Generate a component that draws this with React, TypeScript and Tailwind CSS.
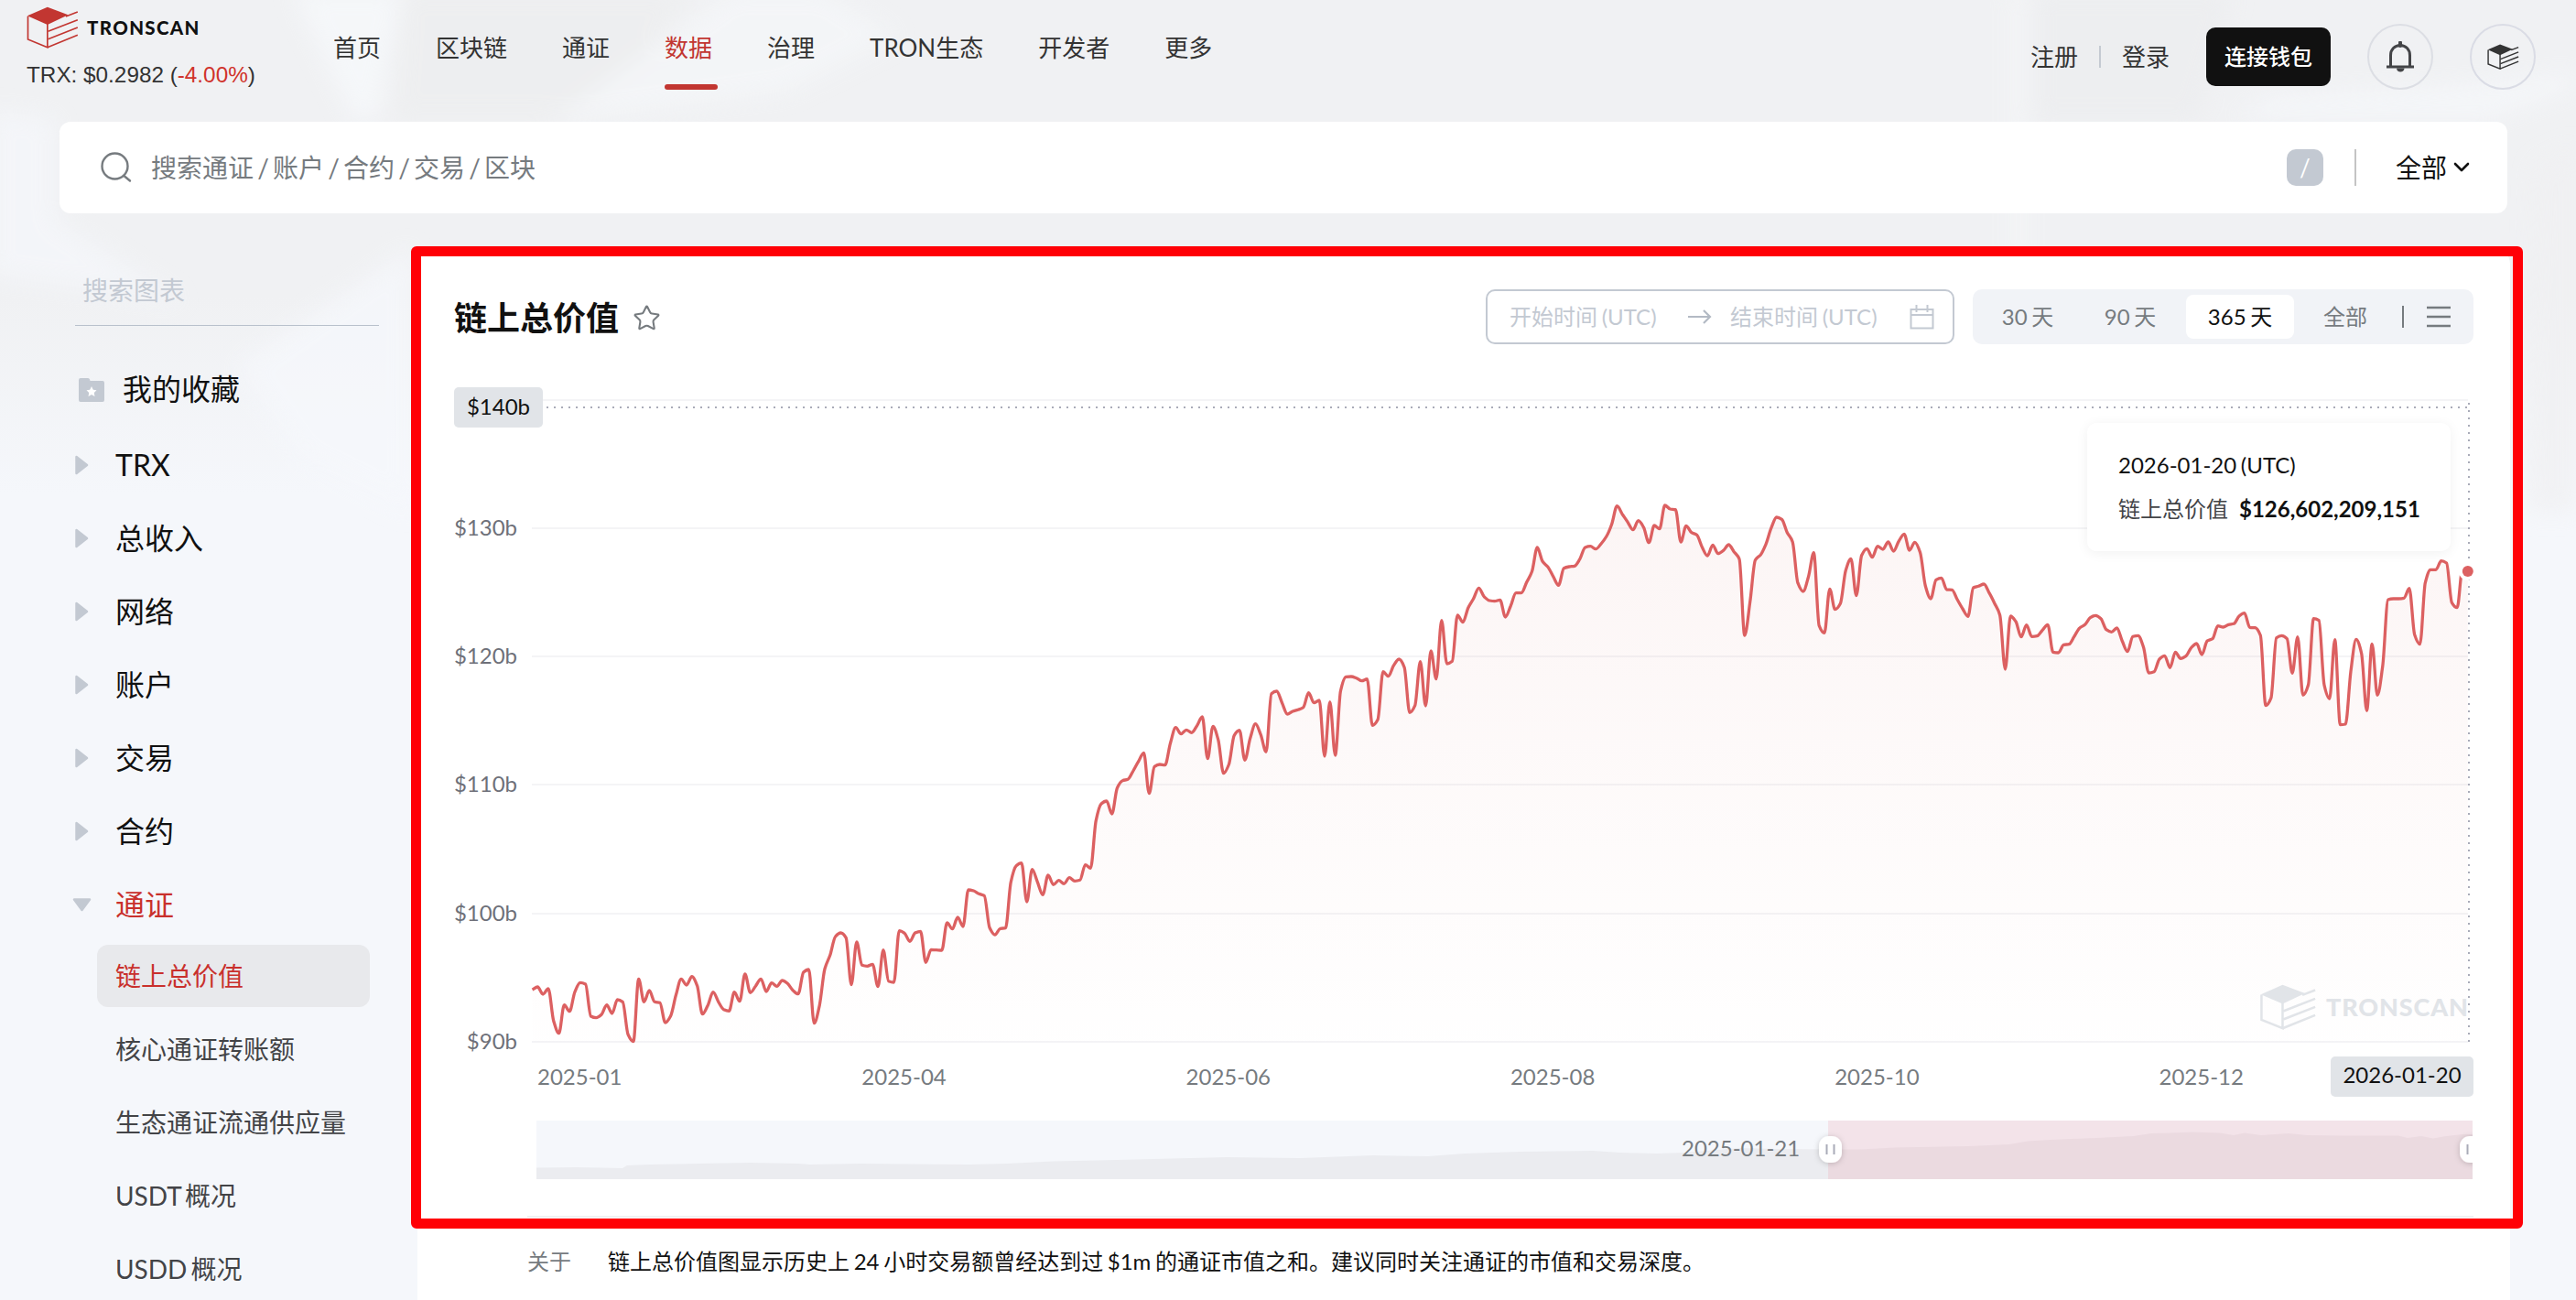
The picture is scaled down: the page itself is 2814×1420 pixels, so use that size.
import { Star } from 'lucide-react';
import clsx from 'clsx';

const NAV_ITEMS = ['首页', '区块链', '通证', '数据', '治理', 'TRON生态', '开发者', '更多'];

const MENU_ITEMS = ['TRX', '总收入', '网络', '账户', '交易', '合约', '通证'];

const SUB_ITEMS = ['链上总价值', '核心通证转账额', '生态通证流通供应量', 'USDT 概况', 'USDD 概况'];

const RANGES = [
  { label: '30 天', className: 'w-[112px]' },
  { label: '90 天', className: 'w-[112px]' },
  { label: '365 天', className: 'w-[118px]' },
  { label: '全部', className: 'w-[112px]' },
];

const Y_TICKS = [
  { label: '$130b', y: 577 },
  { label: '$120b', y: 717 },
  { label: '$110b', y: 857 },
  { label: '$100b', y: 998 },
  { label: '$90b', y: 1138 },
];

const X_TICKS = ['2025-01', '2025-04', '2025-06', '2025-08', '2025-10', '2025-12'];

const PLOT_LEFT = 581.5;
const PLOT_TOP = 520;
const PLOT_BOTTOM = 1138;
const DAY_WIDTH = 5.8085;

// One value per day, in thirds of a pixel below PLOT_TOP
const SERIES = [
  1683, 1674, 1698, 1680, 1785, 1826, 1733, 1754, 1690, 1660, 1665, 1770, 1775, 1765, 1733, 1761,
  1716, 1723, 1830, 1853, 1648, 1723, 1686, 1723, 1726, 1791, 1770, 1702, 1648, 1668, 1640, 1670,
  1763, 1735, 1691, 1723, 1748, 1753, 1691, 1721, 1632, 1693, 1671, 1648, 1689, 1661, 1672, 1653,
  1663, 1685, 1697, 1626, 1617, 1793, 1735, 1615, 1570, 1509, 1497, 1513, 1667, 1527, 1603, 1606,
  1600, 1673, 1553, 1655, 1659, 1490, 1498, 1525, 1497, 1492, 1594, 1552, 1553, 1554, 1464, 1484,
  1446, 1476, 1356, 1359, 1369, 1375, 1480, 1503, 1483, 1481, 1330, 1277, 1268, 1395, 1289, 1330,
  1372, 1308, 1339, 1325, 1336, 1316, 1327, 1324, 1274, 1285, 1130, 1074, 1065, 1107, 1022, 998,
  994, 966, 935, 907, 1040, 952, 945, 947, 875, 824, 845, 832, 841, 818, 789, 926, 820, 865, 974,
  945, 850, 833, 931, 860, 812, 848, 904, 713, 705, 743, 780, 771, 766, 758, 710, 743, 735, 918,
  740, 915, 705, 658, 657, 662, 671, 665, 817, 798, 641, 656, 620, 600, 627, 775, 752, 608, 753,
  573, 665, 473, 615, 607, 456, 479, 432, 402, 367, 395, 408, 410, 406, 462, 425, 383, 383, 348,
  313, 234, 280, 298, 329, 358, 302, 297, 295, 272, 234, 230, 239, 222, 198, 158, 98, 125, 151,
  176, 146, 168, 218, 162, 173, 96, 108, 110, 216, 163, 185, 193, 233, 261, 226, 254, 244, 225,
  248, 272, 522, 415, 275, 258, 223, 170, 135, 142, 185, 215, 350, 378, 330, 251, 490, 514, 370,
  437, 418, 310, 271, 392, 260, 238, 266, 230, 240, 216, 246, 213, 190, 243, 217, 250, 360, 402,
  340, 334, 372, 373, 405, 435, 460, 366, 361, 354, 383, 417, 455, 633, 459, 477, 527, 488, 526,
  524, 505, 487, 577, 579, 553, 551, 525, 498, 487, 464, 457, 467, 503, 511, 498, 540, 575, 526,
  523, 560, 645, 641, 600, 589, 628, 577, 598, 590, 562, 549, 585, 540, 533, 491, 495, 487, 484,
  459, 449, 496, 497, 522, 752, 727, 530, 523, 533, 646, 527, 718, 685, 467, 473, 685, 730, 536,
  815, 813, 640, 535, 580, 769, 550, 718, 620, 405, 402, 402, 400, 368, 520, 551, 350, 307, 307,
  278, 285, 415, 431, 305, 312,
];

// Overview silhouette behind the range slider
const OVERVIEW =
  '586,1275.5 630,1275 680,1276 685,1273 710,1272 740,1271.5 820,1270 872,1271 885,1272 940,1271 1060,1272 1100,1271 1150,1268.5 1200,1267.5 1260,1266 1340,1264 1420,1265 1500,1262 1560,1263 1600,1260 1660,1258 1740,1257 1770,1259 1810,1260 1840,1259 1900,1254 1940,1255 1997,1255.5 2030,1255.5 2070,1253.5 2120,1252.5 2150,1252 2195,1250 2215,1246.5 2240,1245 2290,1243 2330,1241 2350,1238 2370,1237.5 2395,1236.5 2425,1237.5 2440,1240 2452,1237.5 2470,1240 2500,1238 2520,1240 2560,1240.5 2620,1240.5 2630,1243 2645,1241 2658,1243.5 2672,1241 2690,1239 2701,1239';

const POINTS = SERIES.map((v, i) => ({ x: PLOT_LEFT + i * DAY_WIDTH, y: PLOT_TOP + v / 3 }));

// Monotone cubic interpolation, so that the curve never overshoots a day's value
function buildLine(points: { x: number; y: number }[]) {
  const slopes = points.slice(1).map((p, i) => (p.y - points[i].y) / (p.x - points[i].x));
  const tangents = points.map((_, i) => {
    if (i === 0) return slopes[0];
    if (i === points.length - 1) return slopes[i - 1];
    const a = slopes[i - 1];
    const b = slopes[i];
    return a * b <= 0 ? 0 : (2 * a * b) / (a + b);
  });
  return points
    .map((p, i) => {
      if (i === 0) return `M${p.x.toFixed(1)},${p.y.toFixed(1)}`;
      const prev = points[i - 1];
      const d = (p.x - prev.x) / 3;
      return `C${(prev.x + d).toFixed(1)},${(prev.y + tangents[i - 1] * d).toFixed(1)} ${(p.x - d).toFixed(1)},${(p.y - tangents[i] * d).toFixed(1)} ${p.x.toFixed(1)},${p.y.toFixed(1)}`;
    })
    .join('');
}

const LINE = buildLine(POINTS);
const AREA = `${LINE}L2695.8,${PLOT_BOTTOM}L${PLOT_LEFT},${PLOT_BOTTOM}Z`;

function CubePaths() {
  return (
    <>
      <path d="M68 2 L136 28 L68 60 L2 31 Z" fill="currentColor" stroke="none" />
      <path d="M4 32 V108 L68 134 V56" />
      <path d="M128 33 L167 18 M70 82 L167 44 M70 107 L167 69 M68 134 L167 94" />
    </>
  );
}

function CubeIcon({ className, strokeWidth = 5 }: { className?: string; strokeWidth?: number }) {
  return (
    <svg viewBox="0 0 170 138" className={className} fill="none" stroke="currentColor" strokeWidth={strokeWidth}>
      <CubePaths />
    </svg>
  );
}

function Background() {
  return (
    <svg className="absolute inset-0" width="2814" height="1420" viewBox="0 0 2814 1420">
      <defs>
        <linearGradient id="haze" x1="0" y1="0" x2="0" y2="1">
          <stop offset="0" stopColor="#f0f1f3" />
          <stop offset="0.6" stopColor="#f0f1f3" />
          <stop offset="1" stopColor="#f5f7fb" />
        </linearGradient>
        <filter id="soft">
          <feGaussianBlur stdDeviation="12" />
        </filter>
      </defs>
      <rect width="2814" height="1420" fill="#f5f7fb" />
      <rect width="2814" height="540" fill="url(#haze)" />
      <g filter="url(#soft)" opacity="0.75">
        <path d="M440 -10 H760 L660 130 H430 Z" fill="#edeeef" />
        <path d="M320 -10 H440 L412 130 H385 Z" fill="#f7f9fc" />
        <path d="M800 -10 H900 L980 40 L860 100 L600 135 Z" fill="#f5f7f9" />
        <path d="M-10 120 L60 130 V240 L200 330 L-10 300 Z" fill="#f5f7fb" />
        <path d="M2220 -10 H2440 L2400 133 H2220 Z" fill="#ecedef" />
        <path d="M2195 -10 H2215 V290 H2195 Z" fill="#f5f6f8" />
        <path d="M2440 130 L2480 105 L2700 92 L2814 80 V95 L2720 130 Z" fill="#f6f8fb" />
        <path d="M2770 180 L2814 160 V560 L2760 560 Z" fill="#f0f0f2" />
        <path d="M449 270 L260 400 L330 500 L449 560 Z" fill="#f6f8fc" />
      </g>
    </svg>
  );
}

function Header() {
  return (
    <header className="flex h-[133px] items-start pl-[29px] pr-[44px]">
      <div className="w-[335px] pt-[7px]">
        <div className="flex items-center gap-[9px]">
          <CubeIcon className="h-[46px] w-[57px] text-[#c23631]" />
          <span className="font-['Lato'] text-[20.5px] font-black leading-none tracking-[1.35px] text-[#111]">TRONSCAN</span>
        </div>
        <div className="mt-[15px] whitespace-nowrap font-['Liberation_Sans'] text-[24.3px] leading-[28px] text-[#333] [word-spacing:0px]">
          TRX: $0.2982 (<span className="text-[#d0332b]">-4.00%</span>)
        </div>
      </div>
      <nav className="flex gap-[60px] pt-[32px] text-[26px] leading-[40px] text-[#333]">
        {NAV_ITEMS.map((item) => (
          <div key={item} className={clsx('relative whitespace-nowrap', item === '数据' && 'text-[#c23631]')}>
            {item}
            {item === '数据' && (
              <span className="absolute left-0 top-[60px] h-1.5 w-[58px] rounded-[3px] bg-[#c23631]" />
            )}
          </div>
        ))}
      </nav>
      <div className="ml-auto flex items-center pt-[26px] text-[26px] text-[#333]">
        <span>注册</span>
        <span className="ml-[23px] mr-[23px] h-6 w-0.5 bg-[#c4cad2]" />
        <span>登录</span>
        <button className="ml-10 h-16 w-[136px] rounded-[10px] bg-[#111] text-[24px] font-medium text-white">连接钱包</button>
        <div className="ml-10 flex size-[72px] items-center justify-center rounded-full border-2 border-[#dcdee4]">
          <svg width="32" height="34" viewBox="0 0 32 34" fill="none" stroke="#434447" strokeWidth="3">
            <path d="M5.5 27 V15.5 C5.5 9 10 4.5 16 4.5 C22 4.5 26.5 9 26.5 15.5 V27" />
            <path d="M1 28 H31" />
            <path d="M16 1.500 V5" strokeWidth="4" strokeLinecap="round" />
            <path d="M12 29.5 H20.5 C20.5 32 18.5 33.5 16.2 33.5 C14 33.5 12 32 12 29.5 Z" fill="#434447" stroke="none" />
          </svg>
        </div>
        <div className="ml-10 flex size-[72px] items-center justify-center rounded-full border-2 border-[#dadce5]">
          <CubeIcon className="h-7 w-[35px] text-[#333]" strokeWidth={7} />
        </div>
      </div>
    </header>
  );
}

function SearchBar() {
  return (
    <div className="ml-[65px] mr-[75px] flex h-[100px] items-center rounded-xl bg-white pl-[45px] pr-[41px]">
      <svg width="34" height="34" viewBox="0 0 34 34" fill="none" stroke="#767b7f" strokeWidth="2.4" strokeLinecap="round">
        <circle cx="15.5" cy="15.5" r="14" />
        <path d="M26 26.5 L32 31.5" />
      </svg>
      <span className="ml-[21px] text-[28px] text-[#767b7f] [word-spacing:-3px]">搜索通证 / 账户 / 合约 / 交易 / 区块</span>
      <span className="ml-auto flex size-10 items-center justify-center rounded-[10px] bg-[#c3c9d2] text-[26px] text-white">/</span>
      <span className="ml-[34px] mr-[43px] h-10 w-0.5 bg-[#c4c4c4]" />
      <span className="text-[28px] text-[#111]">全部</span>
      <svg className="ml-[7px]" width="18" height="12" viewBox="0 0 18 12" fill="none" stroke="#111" strokeWidth="2.6" strokeLinecap="round" strokeLinejoin="round">
        <path d="M2 2 L9 9 L16 2" />
      </svg>
    </div>
  );
}

function Sidebar() {
  return (
    <aside className="ml-[82px] w-[332px] shrink-0">
      <div className="flex h-[87px] items-center border-b border-[#b9c1cc] pl-2 pt-2.5 text-[28px] text-[#c3c9d2]">搜索图表</div>
      <div className="mt-[29px] flex h-20 items-center pl-1 text-[32px] text-[#111]">
        <svg className="mt-0.5" width="28" height="26" viewBox="0 0 28 26">
          <path d="M2 0 H10 Q12 0 12.5 3 H26 Q28 3 28 5 V24 Q28 26 26 26 H2 Q0 26 0 24 V2 Q0 0 2 0 Z" fill="#c3c9d2" />
          <path d="M14 9 L15.8 12.7 L19.5 13.2 L16.8 16 L17.5 20 L14 18 L10.5 20 L11.2 16 L8.5 13.2 L12.2 12.7 Z" fill="#fff" />
        </svg>
        <span className="ml-5">我的收藏</span>
      </div>
      <div className="mt-[3px]">
        {MENU_ITEMS.map((item) => {
          const open = item === '通证';
          return (
            <div key={item} className={clsx('flex h-20 items-center text-[32px]', open ? 'text-[#c9302c]' : 'text-[#111]')}>
              {open ? (
                <svg className="-ml-[3px] mr-[26px]" width="21" height="15" viewBox="0 0 21 15">
                  <path d="M2 1.5 H19 L10.5 13 Z" fill="#c3c9d2" stroke="#c3c9d2" strokeWidth="2.5" strokeLinejoin="round" />
                </svg>
              ) : (
                <svg className="mr-[29px]" width="15" height="22" viewBox="0 0 15 22">
                  <path d="M1.5 2 V20 L13 11 Z" fill="#c3c9d2" stroke="#c3c9d2" strokeWidth="2.5" strokeLinejoin="round" />
                </svg>
              )}
              {item}
            </div>
          );
        })}
      </div>
      <div className="-mt-0.5">
        {SUB_ITEMS.map((item, i) => (
          <div key={item} className="flex h-20 items-center pl-6 text-[28px] text-[#434447] [word-spacing:-3px]">
            <div
              className={clsx(
                'flex h-[68px] w-[298px] items-center whitespace-nowrap rounded-xl pl-5',
                i === 0 && 'bg-[#e8e9ec] text-[#c9302c]'
              )}
            >
              {item}
            </div>
          </div>
        ))}
      </div>
    </aside>
  );
}

function Toolbar() {
  return (
    <div className="flex h-[60px] items-center">
      <h1 className="pt-0.5 text-[36px] font-bold text-[#111]">链上总价值</h1>
      <Star className="ml-[15px] mt-0.5 size-[31px] text-[#767b7f]" strokeWidth={1.6} />
      <div className="ml-auto flex h-[60px] w-[512px] items-center rounded-[10px] border-2 border-[#c3c9d2] pl-[24px] pr-5 text-[24px] text-[#c3c9d2]">
        <span className="w-[195px]">开始时间 (UTC)</span>
        <svg width="26" height="18" viewBox="0 0 26 18" fill="none" stroke="#b3bac4" strokeWidth="2.2">
          <path d="M0 9 H24 M17 2 L24 9 L17 16" />
        </svg>
        <span className="ml-[20px]">结束时间 (UTC)</span>
        <svg className="ml-auto" width="27" height="27" viewBox="0 0 27 27" fill="none" stroke="#c3c9d2" strokeWidth="2">
          <path d="M1.5 5 H25.5 V25.5 H1.5 Z M1.5 11 H25.5 M7.5 0 V8 M19.5 0 V8" />
        </svg>
      </div>
      <div className="ml-5 flex h-[60px] w-[547px] items-center rounded-[10px] bg-[#f1f3f7] pl-1 text-[24px] text-[#767b7f]">
        {RANGES.map(({ label, className }) => (
          <span
            key={label}
            className={clsx(
              'flex h-12 items-center justify-center rounded-lg',
              className,
              label === '365 天' && 'ml-[5px] bg-white text-[#111]'
            )}
          >
            {label}
          </span>
        ))}
        <span className="ml-[6px] h-6 w-0.5 bg-[#767b7f]" />
        <svg className="ml-[25px]" width="26" height="24" viewBox="0 0 26 24" stroke="#767b7f" strokeWidth="2.4">
          <path d="M0 2 H26 M0 12 H26 M0 22 H26" />
        </svg>
      </div>
    </div>
  );
}

function Chart() {
  return (
    <div className="relative mt-6 h-[900px] w-[2206px]">
      <svg width="2206" height="900" viewBox="496 400 2206 900" className="text-[24px]">
        <defs>
          <linearGradient id="fill" gradientUnits="userSpaceOnUse" x1="0" y1="550" x2="0" y2="1138">
            <stop offset="0" stopColor="#c23631" stopOpacity="0.05" />
            <stop offset="1" stopColor="#c23631" stopOpacity="0.003" />
          </linearGradient>
          <clipPath id="track">
            <rect x="586" y="1224" width="2115" height="64" />
          </clipPath>
          <filter id="knob" x="-50%" y="-50%" width="200%" height="200%">
            <feDropShadow dx="0" dy="1" stdDeviation="3" floodColor="#000" floodOpacity="0.2" />
          </filter>
        </defs>

        <path d="M581 437 H2696" stroke="#f4f4f6" strokeWidth="2" />
        {Y_TICKS.map(({ label, y }) => (
          <g key={label}>
            <path d={`M581 ${y} H2696`} stroke="#f4f4f6" strokeWidth="2" />
            <text x="565" y={y + 7.5} textAnchor="end" fill="#6e7079">
              {label}
            </text>
          </g>
        ))}

        <path d={AREA} fill="url(#fill)" />
        <path d={LINE} fill="none" stroke="#dc6061" strokeWidth="3.3" strokeLinejoin="round" />

        <g
          transform="translate(2469 1075) scale(0.36)"
          className="text-[#e1e4e8]"
          fill="none"
          stroke="currentColor"
          strokeWidth="7"
        >
          <CubePaths />
        </g>
        <text x="2541" y="1109.5" textLength="155" className="text-[27px] font-black" fill="#e1e4e8">
          TRONSCAN
        </text>

        <path d="M597 445 H2696" stroke="#a9abb8" strokeWidth="2" strokeDasharray="2 6" />
        <path d="M2697 440 V1138" stroke="#a9abb8" strokeWidth="2" strokeDasharray="2 6" />
        <circle cx="2695.8" cy="624" r="10" fill="#fff" />
        <circle cx="2695.8" cy="624" r="6" fill="#dc6061" />

        <rect x="496" y="423" width="97" height="44" rx="5" fill="#e1e4e8" />
        <text x="544.5" y="453" textAnchor="middle" fill="#111">
          $140b
        </text>

        {X_TICKS.map((label, i) => (
          <text key={label} x={587 + i * 354.3} y="1185" fill="#767b7f">
            {label}
          </text>
        ))}
        <rect x="2546" y="1154" width="156" height="44" rx="5" fill="#e1e4e8" />
        <text x="2624" y="1183" textAnchor="middle" fill="#111">
          2026-01-20
        </text>

        <g clipPath="url(#track)">
          <rect x="586" y="1224" width="2115" height="64" fill="#f5f7fb" />
          <polygon points={`586,1288 ${OVERVIEW} 2701,1288`} fill="#ebecf0" />
          <rect x="1997" y="1224" width="704" height="64" fill="#eb7f90" fillOpacity="0.16" />
          <text x="1837" y="1263" fill="#767b7f">
            2025-01-21
          </text>
          {[1987, 2687].map((x) => (
            <g key={x}>
              <rect x={x} y="1241" width="25" height="29" rx="11" fill="#fff" filter="url(#knob)" />
              <path d={`M${x + 8.5} 1250 V1261 M${x + 16.5} 1250 V1261`} stroke="#a9abb8" strokeWidth="2" />
            </g>
          ))}
        </g>
      </svg>
      <div className="absolute left-[1784px] top-[62px] flex h-[140px] w-[397px] flex-col justify-center rounded-[10px] bg-white pl-[34px] text-[24px] leading-[48px] text-[#111] shadow-[0_2px_14px_rgba(0,0,0,0.06)]">
        <div>2026-01-20 (UTC)</div>
        <div className="flex whitespace-nowrap">
          <span className="text-[#434447]">链上总价值</span>
          <span className="ml-3 font-bold">$126,602,209,151</span>
        </div>
      </div>
    </div>
  );
}

export default function App() {
  return (
    <div className="relative h-[1420px] w-[2814px] overflow-hidden bg-[#f5f7fb] font-['Lato','Noto_Sans_CJK_SC',sans-serif] [word-spacing:-1.5px]">
      <Background />
      <div className="relative">
        <Header />
        <SearchBar />
        <div className="mt-9 flex">
          <Sidebar />
          <main className="relative ml-[42px] h-[1180px] w-[2286px] rounded-t-[20px] bg-white px-10 pt-[47px]">
            <Toolbar />
            <Chart />
            <div className="ml-20 mt-7 h-0.5 bg-[#f0f1f3]" />
            <div className="ml-20 flex pt-[28px] text-[24px] leading-[40px]">
              <span className="w-[88px] text-[#767b7f]">关于</span>
              <p className="text-[#111]">链上总价值图显示历史上 24 小时交易额曾经达到过 $1m 的通证市值之和。建议同时关注通证的市值和交易深度。</p>
            </div>
            <div className="absolute -left-[7px] top-0 h-[1073px] w-[2307px] rounded-md border-[11px] border-[#ff0006]" />
          </main>
        </div>
      </div>
    </div>
  );
}
